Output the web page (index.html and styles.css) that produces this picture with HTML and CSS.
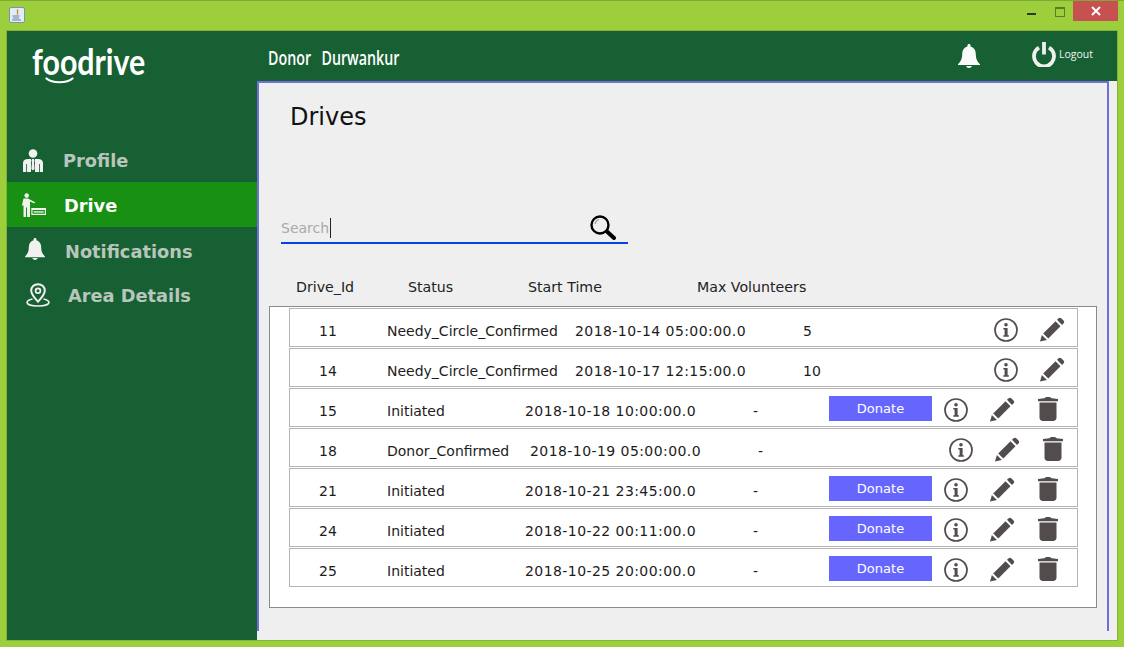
FILE: index.html
```html
<!DOCTYPE html>
<html lang="en">
<head>
<meta charset="UTF-8">
<title>foodrive</title>
<link rel="stylesheet" href="styles.css">
</head>
<body>
<svg class="sprite" width="0" height="0">
  <symbol id="i-bell" viewBox="0 0 22 24">
    <path d="M11 0c1 0 1.600.7 1.600 1.700v.8C16 3.400 17.800 6.200 17.800 10c0 4.500 1 7 4.200 10.200v.8H0v-.8C3.200 17 4.200 14.500 4.200 10c0-3.800 1.800-6.600 5.200-7.500v-.8C9.400.7 10 0 11 0z"/>
    <path d="M8 22h6c-.5 1.300-1.500 2-3 2s-2.500-.7-3-2z"/>
  </symbol>
  <symbol id="i-info" viewBox="0 0 24 24">
    <circle cx="12" cy="12" r="11" fill="none" stroke="#524c4c" stroke-width="1.700"/>
    <circle cx="12" cy="6.800" r="1.800" fill="#524c4c"/>
    <path d="M9.300 10h4.300v7.200h1.300v1.500H9.300v-1.500h1.300v-5.700H9.300z" fill="#524c4c"/>
  </symbol>
  <symbol id="i-pencil" viewBox="0 0 25 25">
    <path d="M0 24.500L1.900 18l5 5z" fill="#524c4c"/>
    <path d="M3.200 16.500L15.500 4.300l5 5L8.300 21.600z" fill="#524c4c"/>
    <path d="M17 2.800l1.300-1.300c1-1 2.300-1 3.200-.1l2 2c.9.900.9 2.200-.1 3.200L22 7.900z" fill="#524c4c"/>
  </symbol>
  <symbol id="i-trash" viewBox="0 0 20 24">
    <path d="M6.500 1.200C7 .4 8 0 10 0s3 .4 3.500 1.200L20 2v2.200H0V2z" fill="#524c4c"/>
    <path d="M1.500 5.500h17v15c0 2.200-1.300 3.500-3.500 3.500H5c-2.200 0-3.500-1.300-3.500-3.500z" fill="#524c4c"/>
  </symbol>
</svg>

<div class="window">
  <div class="titlebar">
    <svg class="java" width="16" height="16" viewBox="0 0 16 16">
      <rect x=".5" y=".5" width="15" height="15" rx="1.500" fill="#e4ecf6" stroke="#7c93b5"/>
      <path d="M9 2.500C7 4.500 10 5.500 8 7.500" fill="none" stroke="#dd7a2c" stroke-width="1.300"/>
      <path d="M3.500 9h7M4 11h6M3 13h9" stroke="#5f7fa8" fill="none"/>
    </svg>
    <div class="controls">
      <span class="min"></span>
      <span class="max"></span>
      <span class="close">
        <svg width="10" height="10" viewBox="0 0 10 10"><path d="M1 1l8 8M9 1l-8 8" stroke="#fff" stroke-width="2"/></svg>
      </span>
    </div>
  </div>

  <div class="frame">
    <div class="sidebar">
      <div class="logo">
        <span class="logo-text">foodrive</span>
        <svg class="smile" width="29" height="7" viewBox="0 0 29 7"><path d="M1.500 1.500C7 6.500 22 6.500 27.500 1.500" fill="none" stroke="#fff" stroke-width="2.200" stroke-linecap="round"/></svg>
      </div>
      <div class="nav">
        <div class="nav-item">
          <svg class="nav-icon pi" width="20" height="24" viewBox="0 0 20 24" fill="#f1f1ef">
            <circle cx="10" cy="4.500" r="4.300"/>
            <path d="M5 10h3v13H3.800V15H3v8H0v-9c0-2.400 2-4 5-4zM15 10h-3v13h4.200V15h.8v8h3v-9c0-2.400-2-4-5-4zM9 10h2l.6 2-.6 1.200.6 6.800-1.600 1.500L8.400 20 9 13.200 8.400 12z"/>
          </svg>
          <span class="nav-label">Profile</span>
        </div>
        <div class="nav-item active">
          <svg class="nav-icon di" width="24" height="24" viewBox="0 0 24 24" fill="#f1f1ef">
            <circle cx="4.700" cy="2.600" r="2.300"/>
            <path d="M1.500 5.500h4.500L13 9.300l-.7 1.300L8 8.500V24H5v-9.500H4V24H1.500V12L.8 13 0 12z"/>
            <path d="M9.300 15H24v7H9.300zM10.500 17v3.800h12.300V17z" fill-rule="evenodd"/>
            <path d="M11.500 18h10.300v1.800H11.500z" opacity=".75"/>
          </svg>
          <span class="nav-label">Drive</span>
        </div>
        <div class="nav-item notif">
          <svg class="nav-icon bi" width="20" height="24" fill="#f1f1ef"><use href="#i-bell"/></svg>
          <span class="nav-label">Notifications</span>
        </div>
        <div class="nav-item">
          <svg class="nav-icon ai" width="24" height="24" viewBox="0 0 24 24" fill="none" stroke="#f1f1ef">
            <path d="M12 1.200c-4 0-6.800 2.800-6.800 6.500 0 3.500 3.600 7.500 6.800 11 3.200-3.500 6.800-7.500 6.800-11 0-3.700-2.800-6.500-6.800-6.500z" stroke-width="2"/>
            <circle cx="12" cy="7.800" r="2.400" stroke-width="1.800"/>
            <path d="M6.500 16C3 16.700 1 18 1 19.600 1 21.600 6 23 12 23s11-1.400 11-3.400c0-1.600-2-2.900-5.500-3.600" stroke-width="1.600"/>
          </svg>
          <span class="nav-label">Area Details</span>
        </div>
      </div>
    </div>

    <div class="main">
      <div class="header">
        <div class="who-box"><span class="who">Donor&nbsp; Durwankur</span></div>
        <svg class="head-bell" width="22" height="24" fill="#fafafa"><use href="#i-bell"/></svg>
        <div class="logout">
          <svg width="24" height="25" viewBox="0 0 24 25" fill="none" stroke="#efefef" stroke-width="3.800">
            <path d="M7 5.700a10 10 0 1 0 10 0"/>
            <path d="M12 0v12.500"/>
          </svg>
          <span>Logout</span>
        </div>
      </div>

      <div class="panel">
        <h1 class="title">Drives</h1>

        <div class="search">
          <span class="placeholder">Search</span><span class="caret"></span>
          <svg class="search-icon" width="26" height="25" viewBox="0 0 26 25" fill="none" stroke="#000">
            <circle cx="10" cy="10" r="8.500" stroke-width="2.400"/>
            <path d="M5 9c.5-2.500 2-4 4-4.500" stroke="#999" stroke-width="1.200"/>
            <path d="M17 16.500l7 6.500" stroke-width="4" stroke-linecap="round"/>
          </svg>
        </div>

        <div class="cols">
          <span class="col-id">Drive_Id</span>
          <span class="col-status">Status</span>
          <span class="col-time">Start Time</span>
          <span>Max Volunteers</span>
        </div>

        <div class="list">
          <div class="row confirmed">
            <span class="id">11</span><span class="status">Needy_Circle_Confirmed</span><span class="time">2018-10-14 05:00:00.0</span><span>5</span>
            <div class="actions">
              <svg class="info"><use href="#i-info"/></svg>
              <svg class="pencil"><use href="#i-pencil"/></svg>
            </div>
          </div>
          <div class="row confirmed">
            <span class="id">14</span><span class="status">Needy_Circle_Confirmed</span><span class="time">2018-10-17 12:15:00.0</span><span>10</span>
            <div class="actions">
              <svg class="info"><use href="#i-info"/></svg>
              <svg class="pencil"><use href="#i-pencil"/></svg>
            </div>
          </div>
          <div class="row initiated">
            <span class="id">15</span><span class="status">Initiated</span><span class="time">2018-10-18 10:00:00.0</span><span>-</span>
            <div class="actions">
              <span class="donate">Donate</span>
              <svg class="info"><use href="#i-info"/></svg>
              <svg class="pencil"><use href="#i-pencil"/></svg>
              <svg class="trash"><use href="#i-trash"/></svg>
            </div>
          </div>
          <div class="row donor">
            <span class="id">18</span><span class="status">Donor_Confirmed</span><span class="time">2018-10-19 05:00:00.0</span><span>-</span>
            <div class="actions">
              <svg class="info"><use href="#i-info"/></svg>
              <svg class="pencil"><use href="#i-pencil"/></svg>
              <svg class="trash"><use href="#i-trash"/></svg>
            </div>
          </div>
          <div class="row initiated">
            <span class="id">21</span><span class="status">Initiated</span><span class="time">2018-10-21 23:45:00.0</span><span>-</span>
            <div class="actions">
              <span class="donate">Donate</span>
              <svg class="info"><use href="#i-info"/></svg>
              <svg class="pencil"><use href="#i-pencil"/></svg>
              <svg class="trash"><use href="#i-trash"/></svg>
            </div>
          </div>
          <div class="row initiated">
            <span class="id">24</span><span class="status">Initiated</span><span class="time">2018-10-22 00:11:00.0</span><span>-</span>
            <div class="actions">
              <span class="donate">Donate</span>
              <svg class="info"><use href="#i-info"/></svg>
              <svg class="pencil"><use href="#i-pencil"/></svg>
              <svg class="trash"><use href="#i-trash"/></svg>
            </div>
          </div>
          <div class="row initiated">
            <span class="id">25</span><span class="status">Initiated</span><span class="time">2018-10-25 20:00:00.0</span><span>-</span>
            <div class="actions">
              <span class="donate">Donate</span>
              <svg class="info"><use href="#i-info"/></svg>
              <svg class="pencil"><use href="#i-pencil"/></svg>
              <svg class="trash"><use href="#i-trash"/></svg>
            </div>
          </div>
        </div>
      </div>
    </div>
  </div>
</div>
</body>
</html>
```

FILE: styles.css
```css
body {margin:0;padding:0;font-family:"DejaVu Sans",sans-serif;overflow:hidden;}
.sprite {display:block;width:0;height:0;}

.window {width:1124px;height:647px;background:#9dcf3d;border-top:1px solid #7fa83a;box-sizing:border-box;display:flex;flex-direction:column;}

/* title bar */
.titlebar {height:29px;display:flex;padding-left:9px;}
.java {margin-top:6px;}
.controls {margin-left:auto;display:flex;padding-right:6px;}
.min {width:9px;height:2px;background:#2f3a1c;margin:12px 19px 0 0;}
.max {width:8px;height:7px;border:1px solid #5d7a2a;border-top-width:2px;margin:6px 8px 0 0;}
.close {width:45px;height:20px;background:#c75050;display:flex;align-items:center;justify-content:center;}

.frame {flex:1;margin:0 6px 6px;border:1px solid #84b53a;background:#176034;display:flex;}

/* left menu */
.sidebar {width:250px;flex:none;color:#fff;}
.logo {height:106px;padding-left:25px;box-sizing:border-box;}
.logo-text {display:inline-block;font:bold 37px/40px Lato,sans-serif;color:#fff;margin-top:10px;transform:scaleX(.82);transform-origin:left;}
.smile {display:block;margin:-4px 0 0 13px;}
.nav-item {height:45px;box-sizing:border-box;padding-top:2px;display:flex;align-items:center;color:#b8c6bb;font-weight:bold;font-size:17.800px;}
.nav-item.active {background:#179013;color:#fff;padding-top:0;}
.active .nav-label {margin-top:2px;}
.notif .nav-label {margin-top:2px;}
.nav-icon {flex:none;}
.pi {margin:0 20px 0 16px;}
.di {margin:0 18px 0 15px;}
.bi {margin:-3px 20px 0 18px;}
.ai {margin:-1px 18px 0 19px;}

/* top bar */
.main {flex:1;display:flex;flex-direction:column;background:#efefef;}
.header {height:50px;background:#176034;display:flex;align-items:center;flex:none;color:#fff;}
.who-box {width:701px;padding-left:11px;box-sizing:border-box;margin-top:4px;}
.who {display:inline-block;font:600 19px "Open Sans",sans-serif;white-space:nowrap;word-spacing:2px;transform:scaleX(.75);transform-origin:left;}
.head-bell {margin-top:0;}
.logout {display:flex;align-items:center;margin-left:52px;font-size:10.500px;color:#f2f2f2;margin-top:-3px;}
.logout span {margin:-1px 0 0 3px;font-family:"Open Sans",sans-serif;}

/* content */
.panel {width:852px;height:550px;box-sizing:border-box;border:2px solid #6f6fdc;border-bottom:0;padding-top:20px;}
.title {font:normal 24px/28px "DejaVu Sans",sans-serif;color:#111;margin:0 0 81px 31px;}

.search {margin-left:22px;width:347px;height:30px;border-bottom:2px solid #0a3ee8;display:flex;align-items:center;}
.placeholder {font-size:14px;color:#aaa;margin-top:2px;}
.caret {width:1px;height:20px;background:#222;margin:2px 0 0 1px;}
.search-icon {margin-left:auto;margin-right:12px;}

.cols {margin:33px 0 9px;height:20px;line-height:20px;font-size:14.200px;color:#222;display:flex;}
.col-id {margin-left:37px;width:112px;}
.col-status {width:120px;}
.col-time {width:169px;}

.list {margin-left:10px;width:828px;height:302px;box-sizing:border-box;background:#fff;border:1px solid #888a92;padding:1px 0 0 19px;}
.row {width:789px;height:39px;margin-bottom:1px;box-sizing:border-box;border:1px solid #b4b4b4;padding-top:7px;display:flex;align-items:center;font-size:14px;color:#1c1c1c;}
.id {width:97px;padding-left:29px;box-sizing:border-box;}
.time {width:228px;letter-spacing:.43px;}
.confirmed .status {width:188px;}
.initiated .status {width:138px;}
.donor .status {width:143px;}

.actions {margin-left:auto;margin-bottom:2px;display:flex;align-items:center;}
.confirmed .actions {padding-right:12px;}
.initiated .actions {padding-right:19px;}
.donor .actions {padding-right:14px;}
.donate {width:103px;height:25px;line-height:25px;margin-bottom:4px;background:#6666ff;color:#fff;font-size:13px;text-align:center;}
.info {width:24px;height:24px;margin-left:12px;}
.pencil {width:25px;height:25px;margin-left:22px;margin-bottom:2px;}
.trash {width:20px;height:24px;margin-left:23px;margin-bottom:2px;}
```
